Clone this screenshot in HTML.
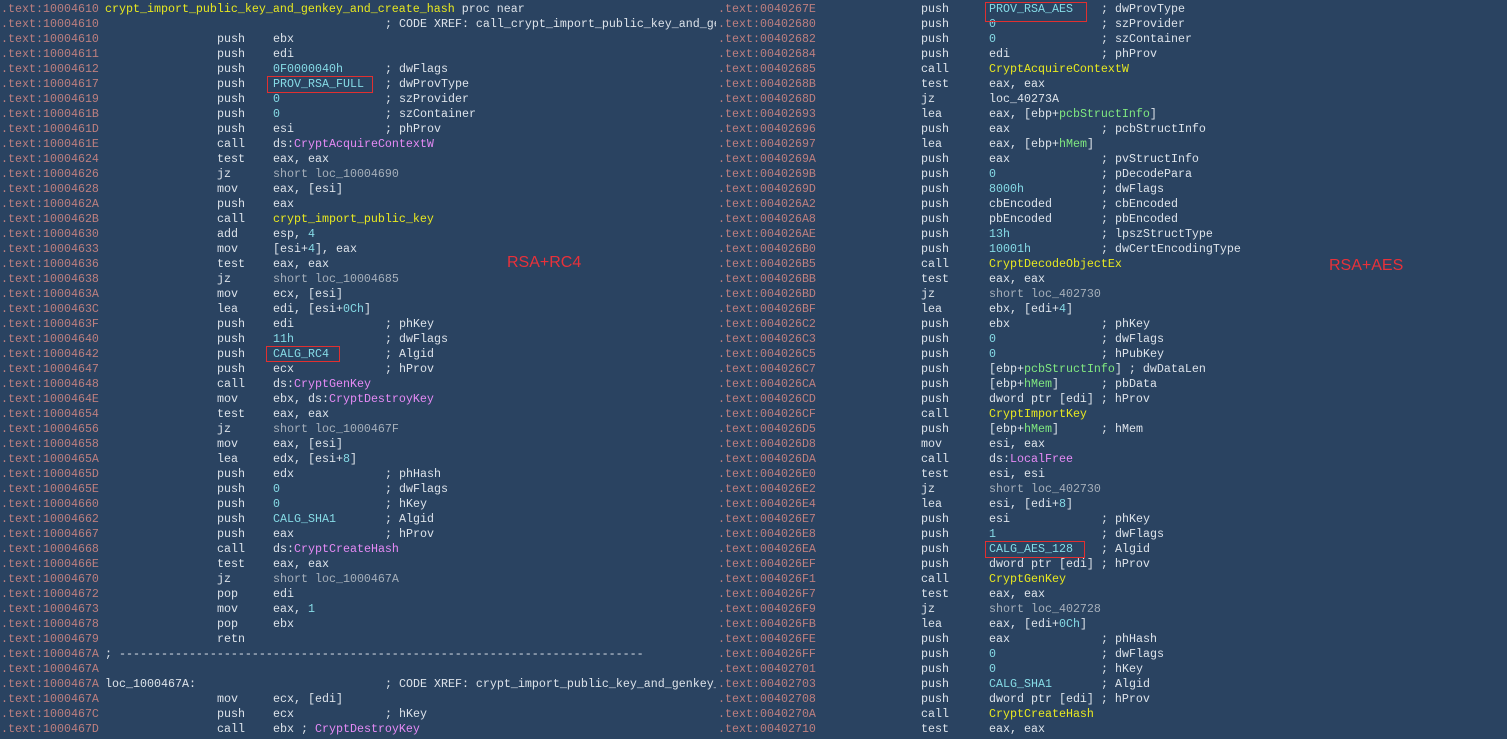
<!DOCTYPE html>
<html><head><meta charset="utf-8"><style>
body{margin:0;width:1507px;height:737px;background:#2a4361;overflow:hidden;position:relative;font-family:"Liberation Mono",monospace;font-size:11.67px;color:#dde3ea}
.p{position:absolute;top:2px;height:737px;overflow:hidden}
.L{left:0;width:716px}.R{left:716px;width:791px}
.r{position:relative;height:15px;line-height:15px;white-space:pre}
.r span{position:absolute;top:0}
.a{color:#bd7f7f}
.L .a{left:1px}.L .m{left:217px}.L .o{left:273px}.L .c{left:385px}.L .t{left:105px}
.R .a{left:2px}.R .m{left:205px}.R .o{left:273px}.R .c{left:385px}
i{font-style:normal}
.n{color:#86dbe6}.y{color:#e8e820}.pu{color:#e58af5}.g{color:#80e880}.gr{color:#a6afba}
.box{position:absolute;border:1px solid #e03030}
.lab{position:absolute;color:#e8313a;font-family:"Liberation Sans",sans-serif;font-size:16px}
</style></head><body>
<div class="p L">
<div class="r"><span class="a">.text:10004610</span><span class="t"><i class="y">crypt_import_public_key_and_genkey_and_create_hash</i> proc near</span></div>
<div class="r"><span class="a">.text:10004610</span><span class="c">; CODE XREF: call_crypt_import_public_key_and_genkey_and_create_hash</span></div>
<div class="r"><span class="a">.text:10004610</span><span class="m">push</span><span class="o">ebx</span></div>
<div class="r"><span class="a">.text:10004611</span><span class="m">push</span><span class="o">edi</span></div>
<div class="r"><span class="a">.text:10004612</span><span class="m">push</span><span class="o n">0F0000040h</span><span class="c">; dwFlags</span></div>
<div class="r"><span class="a">.text:10004617</span><span class="m">push</span><span class="o n">PROV_RSA_FULL</span><span class="c">; dwProvType</span></div>
<div class="r"><span class="a">.text:10004619</span><span class="m">push</span><span class="o n">0</span><span class="c">; szProvider</span></div>
<div class="r"><span class="a">.text:1000461B</span><span class="m">push</span><span class="o n">0</span><span class="c">; szContainer</span></div>
<div class="r"><span class="a">.text:1000461D</span><span class="m">push</span><span class="o">esi</span><span class="c">; phProv</span></div>
<div class="r"><span class="a">.text:1000461E</span><span class="m">call</span><span class="o">ds:<i class="pu">CryptAcquireContextW</i></span></div>
<div class="r"><span class="a">.text:10004624</span><span class="m">test</span><span class="o">eax, eax</span></div>
<div class="r"><span class="a">.text:10004626</span><span class="m">jz</span><span class="o gr">short loc_10004690</span></div>
<div class="r"><span class="a">.text:10004628</span><span class="m">mov</span><span class="o">eax, [esi]</span></div>
<div class="r"><span class="a">.text:1000462A</span><span class="m">push</span><span class="o">eax</span></div>
<div class="r"><span class="a">.text:1000462B</span><span class="m">call</span><span class="o y">crypt_import_public_key</span></div>
<div class="r"><span class="a">.text:10004630</span><span class="m">add</span><span class="o">esp, <i class="n">4</i></span></div>
<div class="r"><span class="a">.text:10004633</span><span class="m">mov</span><span class="o">[esi+<i class="n">4</i>], eax</span></div>
<div class="r"><span class="a">.text:10004636</span><span class="m">test</span><span class="o">eax, eax</span></div>
<div class="r"><span class="a">.text:10004638</span><span class="m">jz</span><span class="o gr">short loc_10004685</span></div>
<div class="r"><span class="a">.text:1000463A</span><span class="m">mov</span><span class="o">ecx, [esi]</span></div>
<div class="r"><span class="a">.text:1000463C</span><span class="m">lea</span><span class="o">edi, [esi+<i class="n">0Ch</i>]</span></div>
<div class="r"><span class="a">.text:1000463F</span><span class="m">push</span><span class="o">edi</span><span class="c">; phKey</span></div>
<div class="r"><span class="a">.text:10004640</span><span class="m">push</span><span class="o n">11h</span><span class="c">; dwFlags</span></div>
<div class="r"><span class="a">.text:10004642</span><span class="m">push</span><span class="o n">CALG_RC4</span><span class="c">; Algid</span></div>
<div class="r"><span class="a">.text:10004647</span><span class="m">push</span><span class="o">ecx</span><span class="c">; hProv</span></div>
<div class="r"><span class="a">.text:10004648</span><span class="m">call</span><span class="o">ds:<i class="pu">CryptGenKey</i></span></div>
<div class="r"><span class="a">.text:1000464E</span><span class="m">mov</span><span class="o">ebx, ds:<i class="pu">CryptDestroyKey</i></span></div>
<div class="r"><span class="a">.text:10004654</span><span class="m">test</span><span class="o">eax, eax</span></div>
<div class="r"><span class="a">.text:10004656</span><span class="m">jz</span><span class="o gr">short loc_1000467F</span></div>
<div class="r"><span class="a">.text:10004658</span><span class="m">mov</span><span class="o">eax, [esi]</span></div>
<div class="r"><span class="a">.text:1000465A</span><span class="m">lea</span><span class="o">edx, [esi+<i class="n">8</i>]</span></div>
<div class="r"><span class="a">.text:1000465D</span><span class="m">push</span><span class="o">edx</span><span class="c">; phHash</span></div>
<div class="r"><span class="a">.text:1000465E</span><span class="m">push</span><span class="o n">0</span><span class="c">; dwFlags</span></div>
<div class="r"><span class="a">.text:10004660</span><span class="m">push</span><span class="o n">0</span><span class="c">; hKey</span></div>
<div class="r"><span class="a">.text:10004662</span><span class="m">push</span><span class="o n">CALG_SHA1</span><span class="c">; Algid</span></div>
<div class="r"><span class="a">.text:10004667</span><span class="m">push</span><span class="o">eax</span><span class="c">; hProv</span></div>
<div class="r"><span class="a">.text:10004668</span><span class="m">call</span><span class="o">ds:<i class="pu">CryptCreateHash</i></span></div>
<div class="r"><span class="a">.text:1000466E</span><span class="m">test</span><span class="o">eax, eax</span></div>
<div class="r"><span class="a">.text:10004670</span><span class="m">jz</span><span class="o gr">short loc_1000467A</span></div>
<div class="r"><span class="a">.text:10004672</span><span class="m">pop</span><span class="o">edi</span></div>
<div class="r"><span class="a">.text:10004673</span><span class="m">mov</span><span class="o">eax, <i class="n">1</i></span></div>
<div class="r"><span class="a">.text:10004678</span><span class="m">pop</span><span class="o">ebx</span></div>
<div class="r"><span class="a">.text:10004679</span><span class="m">retn</span></div>
<div class="r"><span class="a">.text:1000467A</span><span class="t">; ---------------------------------------------------------------------------</span></div>
<div class="r"><span class="a">.text:1000467A</span></div>
<div class="r"><span class="a">.text:1000467A</span><span class="t">loc_1000467A:</span><span class="c">; CODE XREF: crypt_import_public_key_and_genkey_</span></div>
<div class="r"><span class="a">.text:1000467A</span><span class="m">mov</span><span class="o">ecx, [edi]</span></div>
<div class="r"><span class="a">.text:1000467C</span><span class="m">push</span><span class="o">ecx</span><span class="c">; hKey</span></div>
<div class="r"><span class="a">.text:1000467D</span><span class="m">call</span><span class="o">ebx ; <i class="pu">CryptDestroyKey</i></span></div>
</div>
<div class="p R">
<div class="r"><span class="a">.text:0040267E</span><span class="m">push</span><span class="o n">PROV_RSA_AES</span><span class="c">; dwProvType</span></div>
<div class="r"><span class="a">.text:00402680</span><span class="m">push</span><span class="o n">0</span><span class="c">; szProvider</span></div>
<div class="r"><span class="a">.text:00402682</span><span class="m">push</span><span class="o n">0</span><span class="c">; szContainer</span></div>
<div class="r"><span class="a">.text:00402684</span><span class="m">push</span><span class="o">edi</span><span class="c">; phProv</span></div>
<div class="r"><span class="a">.text:00402685</span><span class="m">call</span><span class="o y">CryptAcquireContextW</span></div>
<div class="r"><span class="a">.text:0040268B</span><span class="m">test</span><span class="o">eax, eax</span></div>
<div class="r"><span class="a">.text:0040268D</span><span class="m">jz</span><span class="o">loc_40273A</span></div>
<div class="r"><span class="a">.text:00402693</span><span class="m">lea</span><span class="o">eax, [ebp+<i class="g">pcbStructInfo</i>]</span></div>
<div class="r"><span class="a">.text:00402696</span><span class="m">push</span><span class="o">eax</span><span class="c">; pcbStructInfo</span></div>
<div class="r"><span class="a">.text:00402697</span><span class="m">lea</span><span class="o">eax, [ebp+<i class="g">hMem</i>]</span></div>
<div class="r"><span class="a">.text:0040269A</span><span class="m">push</span><span class="o">eax</span><span class="c">; pvStructInfo</span></div>
<div class="r"><span class="a">.text:0040269B</span><span class="m">push</span><span class="o n">0</span><span class="c">; pDecodePara</span></div>
<div class="r"><span class="a">.text:0040269D</span><span class="m">push</span><span class="o n">8000h</span><span class="c">; dwFlags</span></div>
<div class="r"><span class="a">.text:004026A2</span><span class="m">push</span><span class="o">cbEncoded</span><span class="c">; cbEncoded</span></div>
<div class="r"><span class="a">.text:004026A8</span><span class="m">push</span><span class="o">pbEncoded</span><span class="c">; pbEncoded</span></div>
<div class="r"><span class="a">.text:004026AE</span><span class="m">push</span><span class="o n">13h</span><span class="c">; lpszStructType</span></div>
<div class="r"><span class="a">.text:004026B0</span><span class="m">push</span><span class="o n">10001h</span><span class="c">; dwCertEncodingType</span></div>
<div class="r"><span class="a">.text:004026B5</span><span class="m">call</span><span class="o y">CryptDecodeObjectEx</span></div>
<div class="r"><span class="a">.text:004026BB</span><span class="m">test</span><span class="o">eax, eax</span></div>
<div class="r"><span class="a">.text:004026BD</span><span class="m">jz</span><span class="o gr">short loc_402730</span></div>
<div class="r"><span class="a">.text:004026BF</span><span class="m">lea</span><span class="o">ebx, [edi+<i class="n">4</i>]</span></div>
<div class="r"><span class="a">.text:004026C2</span><span class="m">push</span><span class="o">ebx</span><span class="c">; phKey</span></div>
<div class="r"><span class="a">.text:004026C3</span><span class="m">push</span><span class="o n">0</span><span class="c">; dwFlags</span></div>
<div class="r"><span class="a">.text:004026C5</span><span class="m">push</span><span class="o n">0</span><span class="c">; hPubKey</span></div>
<div class="r"><span class="a">.text:004026C7</span><span class="m">push</span><span class="o">[ebp+<i class="g">pcbStructInfo</i>] ; dwDataLen</span></div>
<div class="r"><span class="a">.text:004026CA</span><span class="m">push</span><span class="o">[ebp+<i class="g">hMem</i>]</span><span class="c">; pbData</span></div>
<div class="r"><span class="a">.text:004026CD</span><span class="m">push</span><span class="o">dword ptr [edi] ; hProv</span></div>
<div class="r"><span class="a">.text:004026CF</span><span class="m">call</span><span class="o y">CryptImportKey</span></div>
<div class="r"><span class="a">.text:004026D5</span><span class="m">push</span><span class="o">[ebp+<i class="g">hMem</i>]</span><span class="c">; hMem</span></div>
<div class="r"><span class="a">.text:004026D8</span><span class="m">mov</span><span class="o">esi, eax</span></div>
<div class="r"><span class="a">.text:004026DA</span><span class="m">call</span><span class="o">ds:<i class="pu">LocalFree</i></span></div>
<div class="r"><span class="a">.text:004026E0</span><span class="m">test</span><span class="o">esi, esi</span></div>
<div class="r"><span class="a">.text:004026E2</span><span class="m">jz</span><span class="o gr">short loc_402730</span></div>
<div class="r"><span class="a">.text:004026E4</span><span class="m">lea</span><span class="o">esi, [edi+<i class="n">8</i>]</span></div>
<div class="r"><span class="a">.text:004026E7</span><span class="m">push</span><span class="o">esi</span><span class="c">; phKey</span></div>
<div class="r"><span class="a">.text:004026E8</span><span class="m">push</span><span class="o n">1</span><span class="c">; dwFlags</span></div>
<div class="r"><span class="a">.text:004026EA</span><span class="m">push</span><span class="o n">CALG_AES_128</span><span class="c">; Algid</span></div>
<div class="r"><span class="a">.text:004026EF</span><span class="m">push</span><span class="o">dword ptr [edi] ; hProv</span></div>
<div class="r"><span class="a">.text:004026F1</span><span class="m">call</span><span class="o y">CryptGenKey</span></div>
<div class="r"><span class="a">.text:004026F7</span><span class="m">test</span><span class="o">eax, eax</span></div>
<div class="r"><span class="a">.text:004026F9</span><span class="m">jz</span><span class="o gr">short loc_402728</span></div>
<div class="r"><span class="a">.text:004026FB</span><span class="m">lea</span><span class="o">eax, [edi+<i class="n">0Ch</i>]</span></div>
<div class="r"><span class="a">.text:004026FE</span><span class="m">push</span><span class="o">eax</span><span class="c">; phHash</span></div>
<div class="r"><span class="a">.text:004026FF</span><span class="m">push</span><span class="o n">0</span><span class="c">; dwFlags</span></div>
<div class="r"><span class="a">.text:00402701</span><span class="m">push</span><span class="o n">0</span><span class="c">; hKey</span></div>
<div class="r"><span class="a">.text:00402703</span><span class="m">push</span><span class="o n">CALG_SHA1</span><span class="c">; Algid</span></div>
<div class="r"><span class="a">.text:00402708</span><span class="m">push</span><span class="o">dword ptr [edi] ; hProv</span></div>
<div class="r"><span class="a">.text:0040270A</span><span class="m">call</span><span class="o y">CryptCreateHash</span></div>
<div class="r"><span class="a">.text:00402710</span><span class="m">test</span><span class="o">eax, eax</span></div>
</div>
<div class="box" style="left:267px;top:76px;width:104px;height:15px"></div>
<div class="box" style="left:266px;top:346px;width:72px;height:14px"></div>
<div class="box" style="left:985px;top:2px;width:100px;height:18px"></div>
<div class="box" style="left:985px;top:541px;width:98px;height:15px"></div>
<div class="lab" style="left:507px;top:254px">RSA+RC4</div>
<div class="lab" style="left:1329px;top:257px">RSA+AES</div>
</body></html>
